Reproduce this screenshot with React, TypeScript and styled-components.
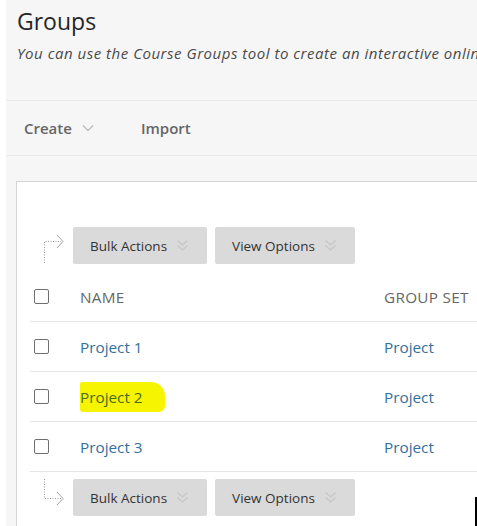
import React from 'react';
import styled, { createGlobalStyle } from 'styled-components';

const GlobalStyle = createGlobalStyle`
  html, body {
    margin: 0;
    padding: 0;
    background: #ffffff;
    overflow: hidden;
  }
  body {
    font-family: 'Open Sans', 'Liberation Sans', sans-serif;
  }
`;

const Page = styled.div`
  margin-left: 6px;
  background: #f6f6f6;
  height: 526px;
  overflow: hidden;
  position: relative;
`;

const PageHeader = styled.div`
  padding: 6px 0 0 11px;
  height: 94px;
  border-bottom: 1px solid #ebebeb;
  box-sizing: content-box;
`;

const Title = styled.h1`
  margin: 0;
  font-size: 23px;
  font-weight: 400;
  color: #262626;
  line-height: 30px;
`;

const Subtitle = styled.p`
  margin: 7px 0 0 0;
  font-size: 15px;
  letter-spacing: 0.52px;
  font-style: italic;
  color: #4a4a4a;
  white-space: nowrap;
  line-height: 20px;
`;

const Toolbar = styled.div`
  display: flex;
  align-items: center;
  gap: 47px;
  height: 54px;
  padding-left: 18px;
  border-bottom: 1px solid #ebebeb;
`;

const ToolbarItem = styled.div`
  display: flex;
  align-items: center;
  gap: 10px;
  font-size: 15px;
  font-weight: 600;
  color: #666666;
`;

const Panel = styled.div`
  margin: 25px 0 0 10px;
  background: #ffffff;
  border-left: 1px solid #d4d4d4;
  border-top: 1px solid #d4d4d4;
  height: 400px;
`;

const ActionBar = styled.div<{ $top: number }>`
  display: flex;
  align-items: center;
  padding-left: 23px;
  margin-top: ${p => p.$top}px;
`;

const ArrowBox = styled.div`
  width: 33px;
  height: 37px;
`;

const Button = styled.div`
  display: flex;
  align-items: center;
  height: 37px;
  padding: 0 18px 0 17px;
  margin-right: 8px;
  background: #dadada;
  border-radius: 2px;
  font-size: 13.5px;
  color: #333333;
  gap: 9px;
`;

const Table = styled.div`
  margin: 8px 0 0 13px;
`;

const Row = styled.div`
  display: grid;
  grid-template-columns: 50px 304px 1fr;
  align-items: center;
  height: 49px;
  border-bottom: 1px solid #e6e6e6;
  font-size: 15.3px;
`;

const Box = styled.div`
  width: 13px;
  height: 13px;
  margin-left: 4px;
  border: 1.5px solid #6f6f6f;
  border-radius: 2px;
`;

const HeadCell = styled.div`
  color: #666666;
  text-transform: uppercase;
  letter-spacing: 0.3px;
`;

const Link = styled.span<{ $marked?: boolean }>`
  color: #33709d;
  ${p =>
    p.$marked &&
    `
    color: #4a6b20;
    background: #f7f400;
    padding: 5px 22px 5px 0;
    border-radius: 2px 14px 6px 3px;
  `}
`;

const Marker = styled.div`
  position: absolute;
  right: 0;
  bottom: 0;
  width: 2px;
  height: 29px;
  background: #000000;
`;

const Chevron = () => (
  <svg width="12" height="8" viewBox="0 0 12 8" fill="none">
    <path d="M1 1.5 L6 6.5 L11 1.5" stroke="#bdbdbd" strokeWidth="1.3" />
  </svg>
);

const DoubleChevron = () => (
  <svg width="13" height="13" viewBox="0 0 13 13" fill="none">
    <path d="M1.5 1.5 L6.5 6 L11.5 1.5" stroke="#c6c6c6" strokeWidth="1.2" />
    <path d="M1.5 6.5 L6.5 11 L11.5 6.5" stroke="#c6c6c6" strokeWidth="1.2" />
  </svg>
);

const ArrowUp = () => (
  <svg width="33" height="37" viewBox="0 0 33 37">
    <path d="M4.5 36 V14.5 H21" stroke="#9a9a9a" strokeWidth="1" strokeDasharray="1 1.5" fill="none" />
    <path d="M17 8 L23 14.5 L17 21" stroke="#a0a0a0" strokeWidth="1" fill="none" />
  </svg>
);

const ArrowDown = () => (
  <svg width="33" height="37" viewBox="0 0 33 37">
    <path d="M4.5 0 V19.5 H21" stroke="#9a9a9a" strokeWidth="1" strokeDasharray="1 1.5" fill="none" />
    <path d="M17 13 L23 19.5 L17 26" stroke="#a0a0a0" strokeWidth="1" fill="none" />
  </svg>
);

const projects = [
  { name: 'Project 1', set: 'Project' },
  { name: 'Project 2', set: 'Project', marked: true },
  { name: 'Project 3', set: 'Project' },
];

const Actions = ({ top, down }: { top: number; down?: boolean }) => (
  <ActionBar $top={top}>
    <ArrowBox>{down ? <ArrowDown /> : <ArrowUp />}</ArrowBox>
    <Button>
      Bulk Actions <DoubleChevron />
    </Button>
    <Button>
      View Options <DoubleChevron />
    </Button>
  </ActionBar>
);

export default function App() {
  return (
    <>
      <GlobalStyle />
      <Page>
        <PageHeader>
          <Title>Groups</Title>
          <Subtitle>You can use the Course Groups tool to create an interactive online</Subtitle>
        </PageHeader>
        <Toolbar>
          <ToolbarItem>
            Create <Chevron />
          </ToolbarItem>
          <ToolbarItem>Import</ToolbarItem>
        </Toolbar>
        <Panel>
          <Actions top={45} />
          <Table>
            <Row>
              <Box />
              <HeadCell>Name</HeadCell>
              <HeadCell>Group Set</HeadCell>
            </Row>
            {projects.map(p => (
              <Row key={p.name}>
                <Box />
                <div>
                  <Link $marked={p.marked}>{p.name}</Link>
                </div>
                <div>
                  <Link>{p.set}</Link>
                </div>
              </Row>
            ))}
          </Table>
          <Actions top={7} down />
        </Panel>
        <Marker />
      </Page>
    </>
  );
}
